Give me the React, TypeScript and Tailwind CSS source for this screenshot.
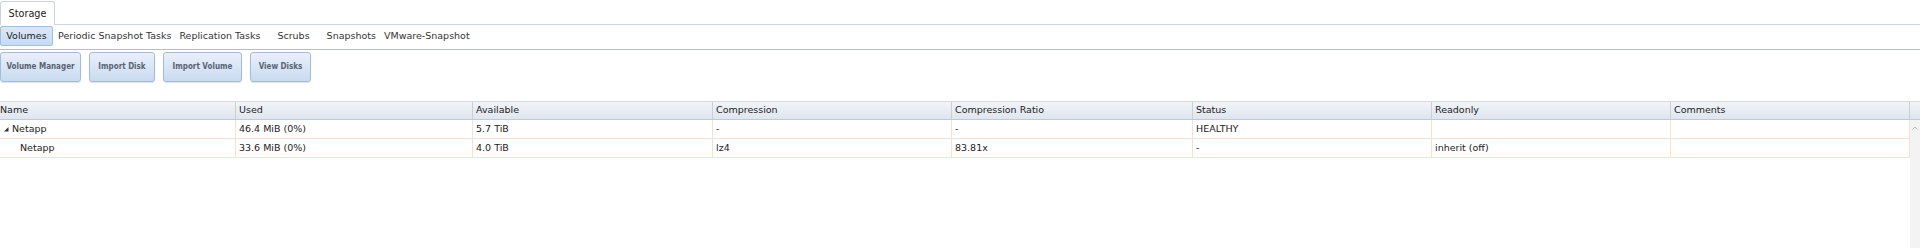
import React from "react";

const cols = ["Name", "Used", "Available", "Compression", "Compression Ratio", "Status", "Readonly", "Comments"];
const gridCls = "grid grid-cols-[236px_237px_240px_239px_241px_239px_239px_239px]";

const rows = [
  { name: "Netapp", level: 0, cells: ["46.4 MiB (0%)", "5.7 TiB", "-", "-", "HEALTHY", "", ""] },
  { name: "Netapp", level: 1, cells: ["33.6 MiB (0%)", "4.0 TiB", "lz4", "83.81x", "-", "inherit (off)", ""] },
];

function ActionButton({ label, w }: { label: string; w: string }) {
  return (
    <div
      className={`${w} h-[30px] flex items-center justify-center whitespace-nowrap rounded-[3px] border border-[#a5bcd8] bg-gradient-to-b from-[#e9f0fa] to-[#c8dbf0] shadow-[0_1px_1px_rgba(0,0,0,0.12)] [font-family:'DejaVu_Sans_Condensed','DejaVu_Sans',sans-serif] text-[8px] font-bold text-[#5a6374]`}
    >
      {label}
    </div>
  );
}

export default function App() {
  return (
    <div className="w-[1920px] h-[248px] bg-white overflow-hidden text-[#222] [font-family:'DejaVu_Sans',Verdana,sans-serif] text-[9.5px]">
      {/* top tab bar */}
      <div className="h-[25px] border-b border-[#cfd5de] flex items-end">
        <div className="h-[24px] w-[55px] bg-white border border-b-0 border-[#cbd3de] rounded-t-[3px] flex items-center justify-center text-[9.7px] text-[#222] -mb-px pt-[2px]">
          Storage
        </div>
      </div>
      {/* sub tabs */}
      <div className="h-[25px] border-b border-[#b9bdc6] flex items-start pt-px">
        <div className="h-[20px] w-[53px] rounded-[2px] border border-[#a4bfdc] bg-gradient-to-b from-[#dae8f7] to-[#c7dcf2] flex items-center justify-center text-[#222]">
          Volumes
        </div>
        <div className="flex items-center h-[20px] text-[#333]">
          <span className="ml-[5px]">Periodic Snapshot Tasks</span>
          <span className="ml-[8px]">Replication Tasks</span>
          <span className="ml-[17px]">Scrubs</span>
          <span className="ml-[17px]">Snapshots</span>
          <span className="ml-[8px]">VMware-Snapshot</span>
        </div>
      </div>
      {/* action buttons */}
      <div className="h-[51px] flex items-start pt-[2px] gap-[8px]">
        <ActionButton label="Volume Manager" w="w-[81px]" />
        <ActionButton label="Import Disk" w="w-[66px]" />
        <ActionButton label="Import Volume" w="w-[79px]" />
        <ActionButton label="View Disks" w="w-[61px]" />
      </div>
      {/* table */}
      <div className="flex">
        <div className="w-[1910px]">
          <div className={`${gridCls} h-[19px] border-t border-b border-t-[#d6dae1] border-b-[#c3c9d2] bg-gradient-to-b from-[#f1f4f8] to-[#dfe6ee]`}>
            {cols.map((c, i) => (
              <div key={c} className={`flex items-center ${i === 0 ? "pl-0" : "pl-[3px]"} border-r border-[#c9d0da] text-[#222]`}>
                {c}
              </div>
            ))}
          </div>
          {rows.map((r, ri) => (
            <div key={ri} className={`${gridCls} h-[19px] border-b border-[#f6e1d1]`}>
              <div className="flex items-center border-r border-[#f6e1d1]">
                {r.level === 0 ? (
                  <>
                    <svg width="8" height="8" viewBox="0 0 8 8" className="ml-[2px] mr-[2px]">
                      <polygon points="6.5,2 6.5,6.5 2,6.5" fill="#333" />
                    </svg>
                    <span>{r.name}</span>
                  </>
                ) : (
                  <span className="pl-[20px]">{r.name}</span>
                )}
              </div>
              {r.cells.map((c, ci) => (
                <div key={ci} className="flex items-center pl-[3px] border-r border-[#f6e1d1]">
                  {c}
                </div>
              ))}
            </div>
          ))}
        </div>
        <div className="w-[10px] flex flex-col">
          <div className="h-[19px] border-t border-b border-t-[#d6dae1] border-b-[#c3c9d2] bg-gradient-to-b from-[#f1f4f8] to-[#dfe6ee]" />
          <div className="h-[130px] bg-[#f3f3f3] flex justify-center pt-[6px]">
            <svg width="6" height="4" viewBox="0 0 6 4">
              <polyline points="0.5,3.5 3,1 5.5,3.5" fill="none" stroke="#b5b5b5" strokeWidth="1" />
            </svg>
          </div>
        </div>
      </div>
    </div>
  );
}
